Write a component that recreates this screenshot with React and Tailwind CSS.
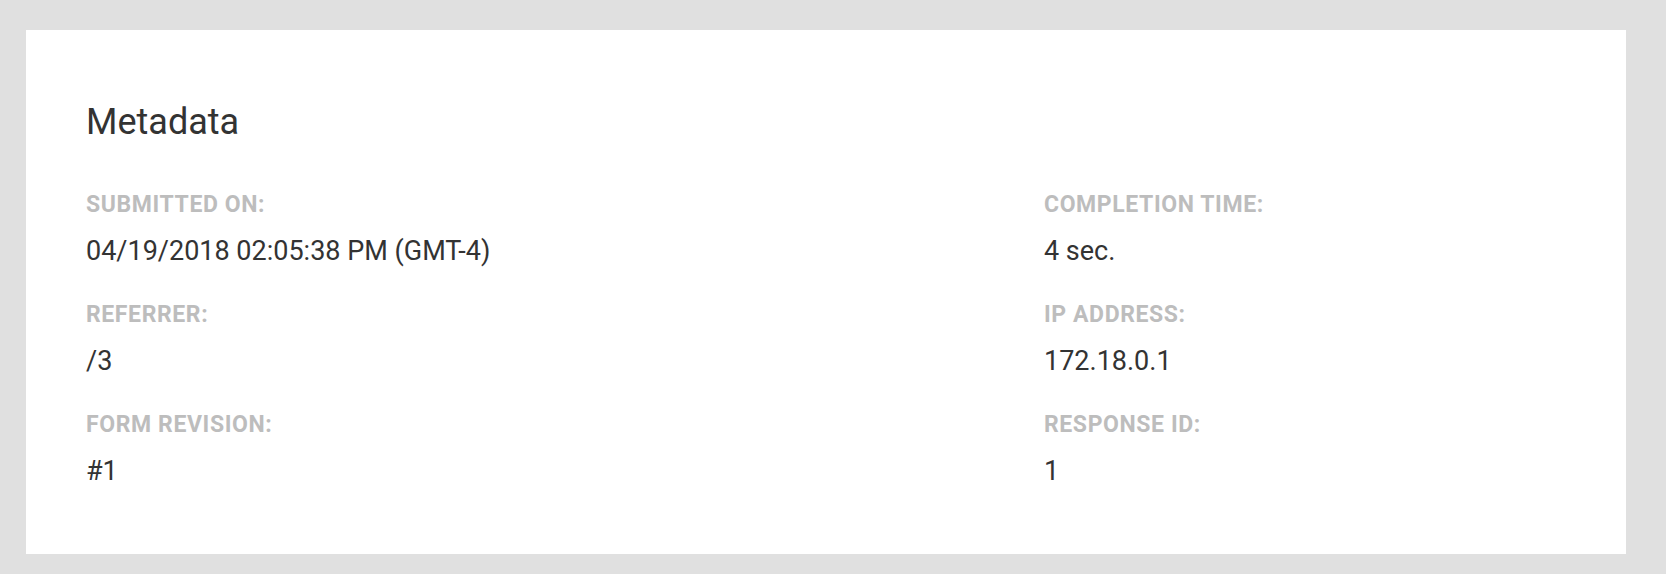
import React from "react";

const fields = [
  { label: "Submitted On:", value: "04/19/2018 02:05:38 PM (GMT-4)" },
  { label: "Completion Time:", value: "4 sec." },
  { label: "Referrer:", value: "/3" },
  { label: "IP Address:", value: "172.18.0.1" },
  { label: "Form Revision:", value: "#1" },
  { label: "Response ID:", value: "1" },
];

const App = () => {
  return (
    <div
      className="h-[574px] bg-[#e0e0e0] pl-[26px] pr-[40px] pt-[30px] pb-[20px]"
      style={{ fontFamily: "Roboto, 'Noto Sans', sans-serif" }}
    >
      <div className="bg-white h-[524px] pt-[72px] pb-[65px] pl-[60px] pr-[60px]">
        {/* Title */}
        <h2 className="text-[36px] leading-[40px] font-normal text-[#333333] mb-[50px]">
          Metadata
        </h2>

        {/* Fields */}
        <div className="grid grid-cols-[958px_1fr] gap-y-[35px]">
          {fields.map((f) => (
            <div key={f.label}>
              <div className="text-[23px] leading-[26px] font-bold uppercase tracking-[0.6px] text-[#bdbdbd] mb-[17px]">
                {f.label}
              </div>
              <div className="text-[27px] leading-[32px] text-[#333333]">
                {f.value}
              </div>
            </div>
          ))}
        </div>
      </div>
    </div>
  );
};

export default App;
